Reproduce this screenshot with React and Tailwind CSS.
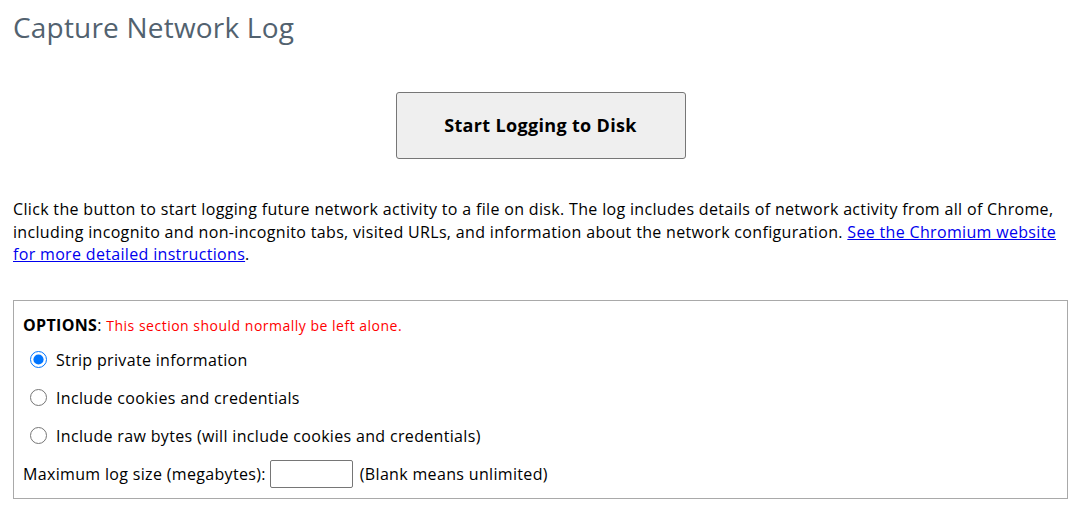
import React, { useState } from "react";

export default function App() {
  const [mode, setMode] = useState("strip");
  const [maxSize, setMaxSize] = useState("");

  const options = [
    { id: "strip", label: "Strip private information" },
    { id: "cookies", label: "Include cookies and credentials" },
    { id: "raw", label: "Include raw bytes (will include cookies and credentials)" },
  ];

  return (
    <div className="min-h-screen bg-white px-[13px] pt-[9px] font-['Open_Sans',sans-serif] text-[16px] tracking-[0.33px] text-black">
      <h1 className="text-[28px] leading-[36px] font-normal tracking-[0.2px] text-[#52626f]">Capture Network Log</h1>

      {/* Start button */}
      <button className="mx-auto mt-[47px] block h-[67px] w-[290px] rounded-[3px] border border-[#767676] bg-[#efefef] text-[18px] font-bold text-black">
        Start Logging to Disk
      </button>

      <p className="mt-[39px] leading-[22.5px]">
        Click the button to start logging future network activity to a file on disk. The log includes details of network activity from all of Chrome,
        <br />
        including incognito and non-incognito tabs, visited URLs, and information about the network configuration.{" "}
        <a href="#" className="text-[#0000ee] underline">
          See the Chromium website
          <br />
          for more detailed instructions
        </a>
        .
      </p>

      {/* Options */}
      <div className="mt-[34px] border border-[#a9a9a9] px-[9px] pt-[13px] pb-[10px]">
        <div className="leading-[22px]">
          <span className="font-bold">OPTIONS</span>:{" "}
          <span className="text-[14px] tracking-[0.5px] text-[#ff0000]">This section should normally be left alone.</span>
        </div>
        <div className="mt-[12px] flex flex-col gap-[16px] pl-[7px]">
          {options.map((o) => (
            <label key={o.id} className="flex h-[22px] items-center gap-[9px]">
              <input
                type="radio"
                name="mode"
                checked={mode === o.id}
                onChange={() => setMode(o.id)}
                className="m-0 h-[17px] w-[17px] accent-[#0075ff]"
              />
              <span>{o.label}</span>
            </label>
          ))}
        </div>
        <div className="mt-[13px] flex items-center gap-[4px]">
          <span>Maximum log size (megabytes):</span>
          <input
            type="text"
            value={maxSize}
            onChange={(e) => setMaxSize(e.target.value)}
            className="h-[28px] w-[83px] rounded-[2px] border border-[#767676] bg-white px-1"
          />
          <span className="ml-[3px]">(Blank means unlimited)</span>
        </div>
      </div>
    </div>
  );
}
